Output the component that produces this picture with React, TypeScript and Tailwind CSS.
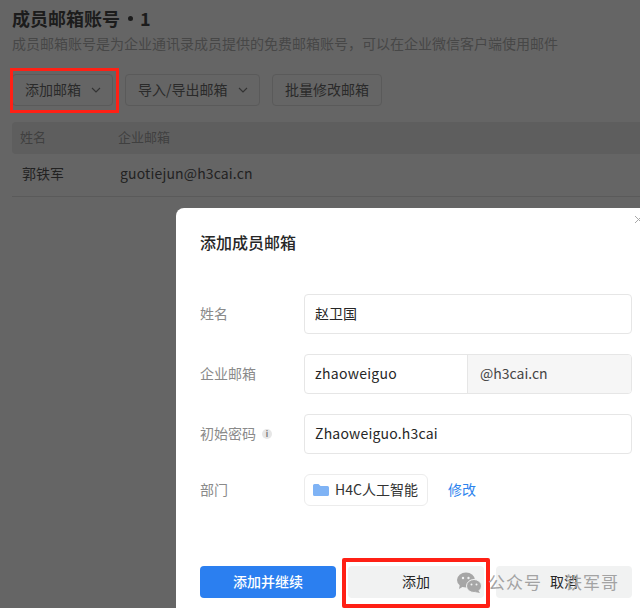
import React from "react";

const font = { fontFamily: '"Noto Sans CJK SC", "Noto Sans", sans-serif' };

function Chevron() {
  return (
    <svg width="10" height="6" viewBox="0 0 10 6" fill="none" stroke="currentColor" strokeWidth="1.100">
      <path d="M1 1l4 4 4-4" />
    </svg>
  );
}

function ToolButton({ label, chevron, className }: { label: string; chevron?: boolean; className: string }) {
  return (
    <div className={`flex h-[32px] items-center rounded-[4px] border border-[#5a5a5a] text-[14px] text-[#2a2a2a] ${className}`}>
      <span className="pb-[2px]">{label}</span>
      {chevron && <span className="ml-[10px] text-[#333333]"><Chevron /></span>}
    </div>
  );
}

function Field({ label, children, info }: { label: string; children: React.ReactNode; info?: boolean }) {
  return (
    <div className="flex h-[40px] items-center">
      <div className="flex w-[104px] shrink-0 items-center pb-[2px] text-[14px] text-[#8a8a8a]">
        {label}
        {info && (
          <span className="ml-[6px] mt-[2px] flex h-[10px] w-[10px] items-center justify-center rounded-full bg-[#e6e6e6] text-[8px] font-bold leading-none text-[#777777]">i</span>
        )}
      </div>
      {children}
    </div>
  );
}

export default function App() {
  return (
    <div style={font} className="relative h-[608px] w-[640px] overflow-hidden bg-[#656565]">
      <div className="pl-[12px] pt-[6px]">
        <div className="flex items-center text-[18px] font-bold leading-[24px] text-[#1c1c1c]">
          <span>成员邮箱账号</span>
          <span className="ml-[8px] h-[5px] w-[5px] rounded-full bg-[#1c1c1c]" />
          <span className="ml-[7px]">1</span>
        </div>
        <div className="mt-[3px] text-[14px] leading-[20px] text-[#474747]">成员邮箱账号是为企业通讯录成员提供的免费邮箱账号，可以在企业微信客户端使用邮件</div>
        <div className="mt-[21px] flex gap-[12px]">
          <ToolButton label="添加邮箱" chevron className="w-[101px] pl-[12px]" />
          <ToolButton label="导入/导出邮箱" chevron className="w-[135px] pl-[12px]" />
          <ToolButton label="批量修改邮箱" className="w-[110px] justify-center" />
        </div>
        <div className="mt-[16px] flex h-[32px] items-center rounded-l-[4px] bg-[#5e5e5e] pb-[2px] text-[13px] text-[#404040]">
          <span className="w-[106px] pl-[8px]">姓名</span>
          <span>企业邮箱</span>
        </div>
        <div className="flex h-[43px] items-center border-b border-[#5a5a5a] pb-[4px] text-[#222222]">
          <span className="w-[108px] pl-[10px] text-[14px]">郭铁军</span>
          <span className="text-[14px] tracking-[0.15px]">guotiejun@h3cai.cn</span>
        </div>
      </div>

      <div className="absolute left-[176px] top-[208px] h-[420px] w-[480px] rounded-[8px] bg-white px-[24px]">
        <svg className="absolute left-[458px] top-[7px]" width="9" height="9" viewBox="0 0 9 9" stroke="#a8a8a8" strokeWidth="1">
          <path d="M1 1l7 7M8 1l-7 7" />
        </svg>
        <div className="pt-[22px] text-[16px] font-medium leading-[24px] text-[#262626]">添加成员邮箱</div>
        <div className="mt-[40px] flex flex-col gap-[20px]">
          <Field label="姓名">
            <div className="flex h-[40px] w-[328px] items-center rounded-[4px] border border-[#e6e6e6] pb-[2px] pl-[10px] text-[14px] text-[#262626]">赵卫国</div>
          </Field>
          <Field label="企业邮箱">
            <div className="flex h-[40px] w-[328px] overflow-hidden rounded-[4px] border border-[#e6e6e6] text-[14px]">
              <div className="flex w-[163px] items-center border-r border-[#e6e6e6] pb-[2px] pl-[10px] tracking-[0.3px] text-[#262626]">zhaoweiguo</div>
              <div className="flex flex-1 items-center bg-[#f6f6f6] pb-[2px] pl-[12px] text-[#444444]">@h3cai.cn</div>
            </div>
          </Field>
          <Field label="初始密码" info>
            <div className="flex h-[40px] w-[328px] items-center rounded-[4px] border border-[#e6e6e6] pb-[2px] pl-[10px] text-[14px] tracking-[0.2px] text-[#262626]">Zhaoweiguo.h3cai</div>
          </Field>
        </div>
        <div className="mt-[20px] flex h-[32px] items-center">
          <div className="w-[104px] shrink-0 pb-[2px] text-[14px] text-[#8a8a8a]">部门</div>
          <div className="flex h-[32px] w-[124px] items-center rounded-[6px] border border-[#ececec] pl-[8px] text-[14px] text-[#333333]">
            <svg width="16" height="14" viewBox="0 0 16 14" className="mr-[6px] shrink-0">
              <path d="M0 2.5A1.5 1.5 0 0 1 1.5 1h4l2 2h7A1.5 1.5 0 0 1 16 4.500v7A1.500 1.500 0 0 1 14.500 13h-13A1.500 1.500 0 0 1 0 11.500z" fill="#7fb3f5" />
            </svg>
            <span className="whitespace-nowrap pb-[2px]">H4C人工智能</span>
          </div>
          <div className="ml-[20px] pb-[2px] text-[14px] text-[#2d84ee]">修改</div>
        </div>
        <div className="mt-[60px] flex gap-[12px]">
          <div className="flex h-[32px] w-[136px] items-center justify-center rounded-[4px] bg-[#2b7ff0] pb-[2px] text-[14px] font-medium text-white">添加并继续</div>
          <div className="flex h-[32px] w-[136px] items-center justify-center rounded-[4px] bg-[#f1f2f2] pb-[2px] text-[14px] text-[#262626]">添加</div>
          <div className="flex h-[32px] w-[136px] items-center justify-center rounded-[4px] bg-[#f1f2f2] pb-[2px] text-[14px] text-[#262626]">取消</div>
        </div>
      </div>

      <div className="absolute left-[10px] top-[68px] h-[45px] w-[109px] border-[3px] border-[#ff2015]" />
      <div className="absolute left-[342px] top-[558px] h-[50px] w-[148px] rounded-[2px] border-[4px] border-[#ff2015]" />

      <div className="absolute left-[457px] top-[569px] flex items-center text-[#a3a3a3]">
        <svg width="25" height="22" viewBox="0 0 25 22" fill="#a6a6a6">
          <ellipse cx="9" cy="8" rx="9" ry="7.500" />
          <path d="M3 12l-1 5 5-3z" />
          <ellipse cx="17" cy="14" rx="7.500" ry="6.500" stroke="#f1f2f2" strokeWidth="1" />
          <path d="M21 18l2 3-5-1z" />
          <circle cx="6" cy="6" r="1.200" fill="#f1f2f2" />
          <circle cx="11.500" cy="6" r="1.200" fill="#f1f2f2" />
          <circle cx="14.500" cy="12.500" r="1" fill="#f1f2f2" />
          <circle cx="19.500" cy="12.500" r="1" fill="#f1f2f2" />
        </svg>
        <span className="ml-[6px] pb-[2px] text-[17px] tracking-[1px]">公众号</span>
        <span className="ml-[23px] pb-[2px] text-[17px] tracking-[1px]">铁军哥</span>
      </div>
    </div>
  );
}
